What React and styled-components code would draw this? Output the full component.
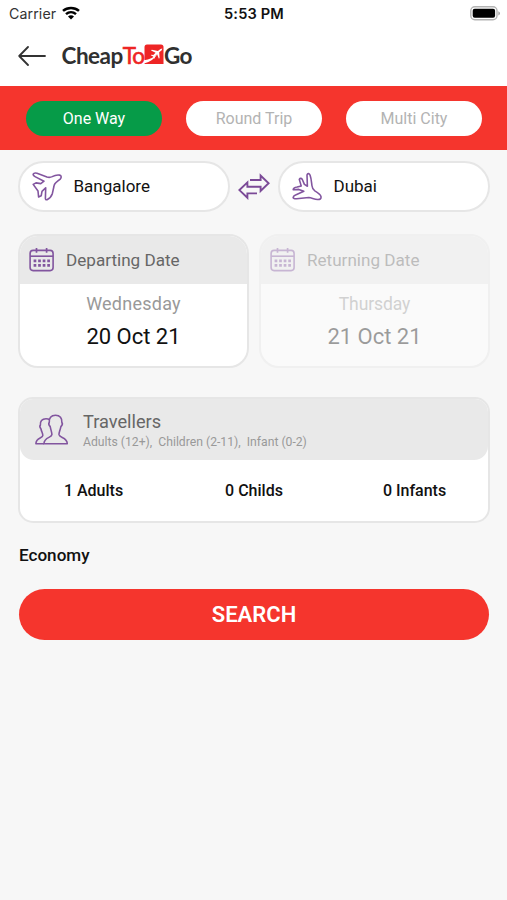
import React from 'react'
import styled, { createGlobalStyle } from 'styled-components';

const tripTypes = ['One Way', 'Round Trip', 'Multi City']
const travellers = ['1 Adults', '0 Childs', '0 Infants']

const WifiIcon = () => (
    <svg width="18" height="14" viewBox="0 0 18 14" fill="none" stroke="#000" strokeWidth="2.5">
        <path d="M1 4.9C5.5 0.9 12.5 0.9 17 4.9" />
        <path d="M4 8.1C6.9 5.5 11.1 5.5 14 8.1" />
        <path d="M9 13.4L6 10.4C7.7 8.9 10.3 8.9 12 10.4Z" fill="#000" stroke="none" />
    </svg>
)

const BatteryIcon = () => (
    <svg width="31" height="15" viewBox="0 0 31 15">
        <rect x="0.8" y="0.8" width="26.2" height="12.9" rx="4" fill="#fff" stroke="#b3b3b3" strokeWidth="1.4" />
        <rect x="2.7" y="2.7" width="22.4" height="9.1" rx="2" fill="#000" />
        <path d="M28.3 5.2C30.6 6 30.6 8.6 28.3 9.4Z" fill="#a6a6a6" />
    </svg>
)

const BackIcon = () => (
    <svg width="28" height="20" viewBox="0 0 28 20" fill="none" stroke="#333" strokeWidth="1.8" strokeLinecap="round" strokeLinejoin="round">
        <path d="M27 10H1.2M10 1L1.2 10L10 19" />
    </svg>
)

const LogoPlane = () => (
    <svg width="20" height="21" viewBox="0 0 20 21">
        <path d="M3 0.5H17Q19.5 0.5 19.5 3V20H0.5V3Q0.5 0.5 3 0.5Z" fill="#ee2525" />
        <path d="M0 16.2Q8 15.7 14 9.3Q9 17.6 0 19.5Z" fill="#fff" />
        <path d="M18.3 4.6L16.5 5L13.9 7L7.8 5.8L7 6.4L11.6 8.8L9.3 10.9L7.3 10.7L6.8 11.2L9.1 12.4L10 14.7L10.7 14.2L10.8 12.2L13.1 10.2L14.9 14.7L15.6 14L15.2 8.2L17.7 6.2Z" fill="#fff" />
    </svg>
)

const DepartIcon = () => (
    <svg width="30" height="29" viewBox="0 0 30 29" fill="none" stroke="#82559f" strokeWidth="1.6" strokeLinejoin="round">
        <path d="M1.2 2.2C1.8 1 3.4 0.9 5 1.3L15 5C17 5.6 18.6 5.4 20.2 4.6C22.6 3.3 25.6 2.8 27.6 3.1C29.6 3.6 29.6 5.6 28.2 7.1C26.3 8.9 24.2 10 22.9 11.8C22.2 12.8 22 13.6 21.8 15L20.4 21.4C19.4 24.6 17.2 26.6 15 27.7C13.8 28.1 13.4 27.3 13.4 26.2L13.7 15.8L10 19.4L9.2 23.8L6.6 25L6 19L1.2 12.4L4 10.9L8.8 11.6L12 9.2L3 4.6C1.7 3.9 0.9 3.2 1.2 2.2Z" />
    </svg>
)

const ArriveIcon = () => (
    <svg width="30" height="29" viewBox="0 0 30 29" fill="none" stroke="#82559f" strokeWidth="1.6" strokeLinejoin="round">
        <path d="M15 2.9C15.6 0.9 17.4 1.4 18.1 3.2C19.2 6 19.4 9.5 19.9 13.5C20.2 16 21 17.7 22.8 18.9C25.5 20.5 28.5 22.5 29 24.6C29.3 27 27.8 27.6 25.6 27.5C22.3 27.2 19.8 25.9 16.8 25.5L4.6 26.8C2.6 26.9 1.1 26.4 1.1 25.3C1.4 23.8 3.2 23.1 4.7 22.5L11.8 19.3L6.8 17.4L1.2 17.8C1.2 16.3 2.7 15.3 5.2 15L9.2 13.9L7.3 7.4C8.1 5.9 9.4 6.2 10.2 7.2L12.4 12.4L15.4 14.2Z" />
    </svg>
)

const SwapIcon = () => (
    <svg width="32" height="27" viewBox="0 0 32 27" fill="none" stroke="#7b4a97" strokeWidth="1.9">
        <path d="M12 7H22.6V2.6L30.6 10.3L22.6 18V13.7H9.4V9.4L1.4 17.1L9.4 24.8V20.4H19" />
    </svg>
)

const CalendarIcon = () => (
    <svg width="26" height="24" viewBox="0 0 26 24" fill="none" stroke="#82559f" strokeWidth="1.6">
        <rect x="1.1" y="2.4" width="23" height="20.2" rx="3" />
        <path d="M1.1 8.2H24.1" />
        <path d="M7.5 0V4.8M17.6 0V4.8" strokeWidth="1.7" />
        <path d="M4.6 12.8H21M4.6 17.4H21" strokeWidth="2.7" strokeDasharray="2.7 1.85" />
    </svg>
)

const PeopleIcon = () => (
    <svg width="34" height="32" viewBox="0 0 34 32" fill="none" stroke="#82559f" strokeWidth="1.6" strokeLinejoin="round">
        <path d="M20.5 1.2C16 1.2 13.8 4.2 14.3 8.2C13.1 9.7 14.2 11.5 15.2 12.6C15.9 16.4 17 18.5 16.9 20.7C16.5 24.2 9.4 22.6 8.9 29.7H32.3C32 23 24.5 24.2 24 20.7C23.8 18.7 25.2 16.2 25.9 12.6C27 11.5 28 9.7 26.8 8.2C27.2 4.2 25 1.2 20.5 1.2Z" />
        <path d="M14.5 5.8C13.7 5 12.5 4.7 11 4.7C6.9 4.7 5 7.4 5.4 11C4.2 12.4 5.2 14 6 15C6.6 18.2 8.2 20 7.8 21.7C7.2 24.7 1 23.6 0.9 29.7H9" />
    </svg>
)

const DateCard = ({ title, day, date, disabled }) => (
    <DateContainer $disabled={disabled}>
        <DateHeader>
            <CalendarIcon />
            <h5>{title}</h5>
        </DateHeader>
        <DateBody $disabled={disabled}>
            <p>{day}</p>
            <h4>{date}</h4>
        </DateBody>
    </DateContainer>
)

export default function App() {
    return (
        <Screen>
            <GlobalStyle />
            <StatusBar>
                <Carrier>
                    <span>Carrier</span>
                    <WifiIcon />
                </Carrier>
                <Time>5:53 PM</Time>
                <BatteryContainer><BatteryIcon /></BatteryContainer>
            </StatusBar>
            <Header>
                <BackIcon />
                <Logo>
                    <span>Cheap</span>
                    <LogoRed>To</LogoRed>
                    <LogoPlane />
                    <span>Go</span>
                </Logo>
            </Header>
            <TripTabs>
                {tripTypes.map((type, i) => (
                    <TripTab key={type} $active={i === 0}>{type}</TripTab>
                ))}
            </TripTabs>
            <Content>
                <RouteRow>
                    <CityInput>
                        <DepartIcon />
                        <span>Bangalore</span>
                    </CityInput>
                    <SwapIcon />
                    <CityInput>
                        <ArriveIcon />
                        <span>Dubai</span>
                    </CityInput>
                </RouteRow>
                <DateRow>
                    <DateCard title="Departing Date" day="Wednesday" date="20 Oct 21" />
                    <DateCard title="Returning Date" day="Thursday" date="21 Oct 21" disabled />
                </DateRow>
                <TravellersCard>
                    <TravellersHeader>
                        <PeopleIcon />
                        <TravellersTitle>
                            <h5>Travellers</h5>
                            <h6>Adults (12+),&nbsp; Children (2-11),&nbsp; Infant (0-2)</h6>
                        </TravellersTitle>
                    </TravellersHeader>
                    <TravellersCounts>
                        {travellers.map((label) => <span key={label}>{label}</span>)}
                    </TravellersCounts>
                </TravellersCard>
                <CabinClass>Economy</CabinClass>
                <SearchButton>SEARCH</SearchButton>
            </Content>
        </Screen>
    )
}

const GlobalStyle = createGlobalStyle`
* {
    box-sizing: border-box;
}
body {
    margin: 0;
    background-color: #f7f7f7;
}
h4, h5, h6, p {
    margin: 0;
    font-weight: 400;
}
svg {
    display: block;
    flex-shrink: 0;
}
`

const Screen = styled.div`
width: 100%;
height: 900px;
overflow: hidden;
background-color: #f7f7f7;
font-family: Roboto, sans-serif;
color: #111;
`

const StatusBar = styled.div`
display: grid;
grid-template-columns: 1fr auto 1fr;
align-items: center;
height: 27px;
padding: 0 6px 0 9px;
background-color: #fff;
font-family: Inter, sans-serif;
`

const Carrier = styled.div`
display: flex;
align-items: center;
gap: 6px;
font-size: 14.2px;
letter-spacing: 0.1px;
color: #333;
svg {
    margin-top: -2px;
}
`

const Time = styled.div`
font-size: 14.6px;
font-weight: 600;
letter-spacing: 0.15px;
margin-left: -2px;
`

const BatteryContainer = styled.div`
display: flex;
justify-content: flex-end;
`

const Header = styled.header`
display: flex;
align-items: center;
gap: 16px;
height: 59px;
padding: 0 0 1px 17.5px;
background-color: #fff;
`

const Logo = styled.div`
display: flex;
align-items: center;
font-family: Lato, sans-serif;
font-size: 22.5px;
font-weight: 700;
letter-spacing: -0.5px;
line-height: 28px;
color: #303030;
svg {
    margin: -3px 0 0;
}
`

const LogoRed = styled.span`
color: #ee2525;
font-weight: 400;
-webkit-text-stroke: 0.6px #ee2525;
letter-spacing: -1.1px;
`

const TripTabs = styled.nav`
display: flex;
justify-content: center;
align-items: center;
gap: 24px;
height: 64px;
padding-left: 1px;
background-color: #f5352d;
`

const TripTab = styled.button`
width: 136px;
height: 35px;
padding: 0;
border: none;
border-radius: 18px;
background-color: ${({ $active }) => $active ? '#069b48' : '#fff'};
color: ${({ $active }) => $active ? '#fff' : '#b3b3b3'};
font-family: inherit;
font-size: 16px;
`

const Content = styled.main`
display: flex;
flex-direction: column;
padding: 11px 17px 0 18px;
`

const RouteRow = styled.div`
display: flex;
justify-content: space-between;
align-items: center;
`

const CityInput = styled.div`
display: flex;
align-items: center;
gap: 12px;
width: 212px;
height: 51px;
padding-left: 12px;
border: 2px solid #e6e6e6;
border-radius: 26px;
background-color: #fff;
font-size: 17px;
span {
    padding-bottom: 2px;
}
svg + span {
    margin-left: -0.5px;
}
`

const DateRow = styled.div`
display: flex;
justify-content: space-between;
margin-top: 22px;
`

const DateContainer = styled.section`
width: 231px;
height: 134px;
border: 2px solid #e6e6e6;
border-radius: 20px;
overflow: hidden;
background-color: #fff;
opacity: ${({ $disabled }) => $disabled ? 0.4 : 1};
`

const DateHeader = styled.div`
display: flex;
align-items: center;
gap: 11px;
height: 48px;
padding-left: 9px;
background-color: #e9e9e9;
h5 {
    padding-bottom: 1px;
    font-size: 17.1px;
    color: #666;
}
`

const DateBody = styled.div`
display: flex;
flex-direction: column;
align-items: center;
padding-top: 8px;
p {
    font-size: ${({ $disabled }) => $disabled ? '17.5px' : '18px'};
    line-height: 24px;
    letter-spacing: ${({ $disabled }) => $disabled ? '-0.1px' : '0.25px'};
    color: #999;
}
h4 {
    margin-top: 6px;
    font-size: 22px;
    line-height: 30px;
}
`

const TravellersCard = styled.section`
height: 126px;
margin-top: 29px;
border: 2px solid #e6e6e6;
border-radius: 15px;
overflow: hidden;
background-color: #fff;
`

const TravellersHeader = styled.div`
display: flex;
align-items: center;
gap: 14px;
height: 61px;
padding-left: 15px;
border-radius: 0 0 14px 14px;
background-color: #e9e9e9;
`

const TravellersTitle = styled.div`
padding-top: 2px;
h5 {
    font-size: 18.2px;
    line-height: 22px;
    color: #666;
}
h6 {
    font-size: 12.2px;
    line-height: 18px;
    color: #999;
}
`

const TravellersCounts = styled.div`
display: grid;
grid-template-columns: repeat(3, 160.5px);
justify-content: center;
align-items: center;
height: 61px;
text-align: center;
font-size: 16px;
font-weight: 500;
`

const CabinClass = styled.div`
margin: 21px 0 0 1px;
font-size: 17.1px;
font-weight: 500;
line-height: 22px;
`

const SearchButton = styled.button`
height: 51px;
margin: 23px 1px 0;
padding: 0 0 1px;
border: none;
border-radius: 26px;
background-color: #f5352d;
color: #fff;
font-family: inherit;
font-size: 22px;
font-weight: 600;
`
